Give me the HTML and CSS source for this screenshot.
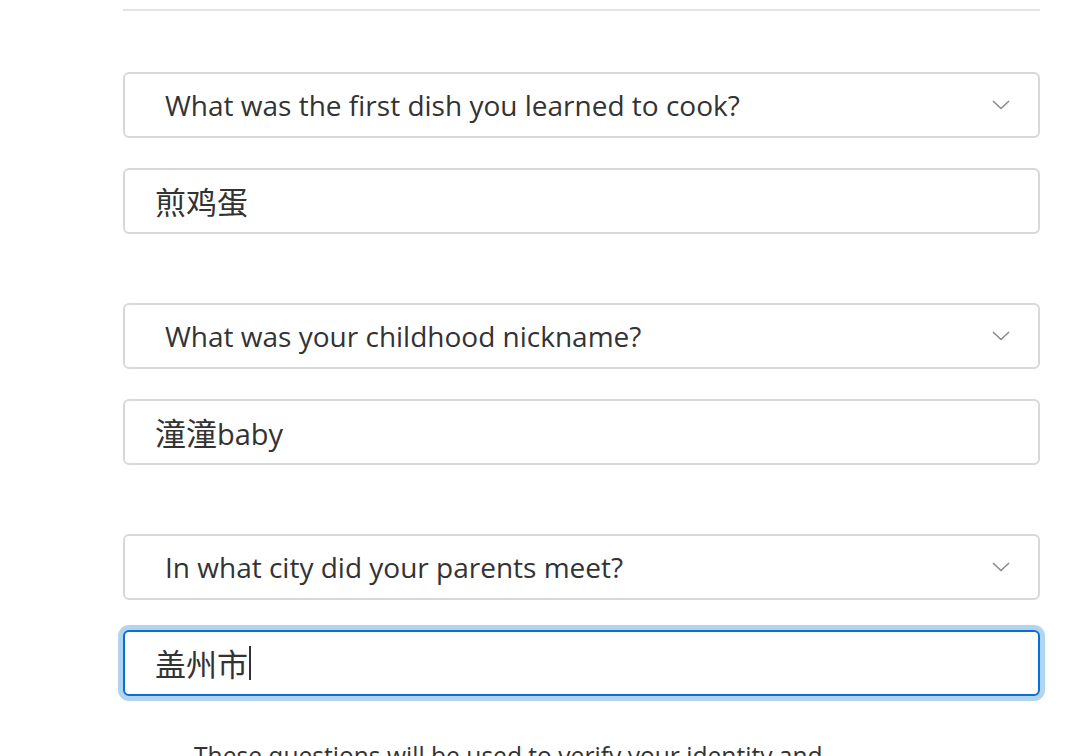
FILE: index.html
```html
<!DOCTYPE html>
<html lang="zh">
<head>
<meta charset="utf-8">
<link rel="stylesheet" href="styles.css">
</head>
<body>
<div class="page">
  <div class="divider"></div>
  <div class="group">
    <div class="field select">
      <span class="label">What was the first dish you learned to cook?</span>
      <svg class="chev" width="18" height="10" viewBox="0 0 18 10"><polyline points="1,1 9,8.5 17,1" fill="none" stroke="#8a8a8a" stroke-width="1.6"/></svg>
    </div>
    <div class="field input"><span class="value"><span class="cjk">煎鸡蛋</span></span></div>
  </div>
  <div class="group">
    <div class="field select">
      <span class="label">What was your childhood nickname?</span>
      <svg class="chev" width="18" height="10" viewBox="0 0 18 10"><polyline points="1,1 9,8.5 17,1" fill="none" stroke="#8a8a8a" stroke-width="1.6"/></svg>
    </div>
    <div class="field input"><span class="value"><span class="cjk">潼潼</span>baby</span></div>
  </div>
  <div class="group">
    <div class="field select">
      <span class="label">In what city did your parents meet?</span>
      <svg class="chev" width="18" height="10" viewBox="0 0 18 10"><polyline points="1,1 9,8.5 17,1" fill="none" stroke="#8a8a8a" stroke-width="1.6"/></svg>
    </div>
    <div class="field input focused"><span class="value"><span class="cjk">盖州市</span></span><span class="caret"></span></div>
  </div>
  <p class="note">These questions will be used to verify your identity and recover your password.</p>
</div>
</body>
</html>
```
FILE: styles.css
```css
* { box-sizing: border-box; }
html, body { margin: 0; padding: 0; background: #fff; }
body {
  font-family: "Open Sans", "Noto Sans CJK SC", sans-serif;
  color: #333;
  overflow: hidden;
  height: 756px;
}
.page {
  margin-left: 123px;
  width: 917px;
  padding-top: 9px;
}
.divider {
  height: 2px;
  background: #e3e3e3;
}
.group {
  margin-top: 61px;
  display: flex;
  flex-direction: column;
  gap: 30px;
}
.group + .group { margin-top: 69px; }
.field {
  height: 66px;
  border: 2px solid #d8d8d8;
  border-radius: 6px;
  display: flex;
  align-items: center;
  font-size: 28px;
  background: #fff;
}
.select {
  padding: 0 28px 0 40px;
  justify-content: space-between;
}
.input { padding-left: 30px; }
.label, .value { line-height: 1; color: #333; }
.value { font-size: 29px; }
.cjk { font-family: "Noto Sans CJK SC", sans-serif; font-size: 31px; }
.focused {
  border-color: #0a6fd3;
  box-shadow: 0 0 0 5px #b3d4ef;
}
.caret {
  width: 2px;
  height: 34px;
  background: #333;
  margin-left: 1px;
}
.note {
  margin: 43px 0 0 71px;
  width: 640px;
  font-size: 24.6px;
  line-height: 1.4;
}
```
